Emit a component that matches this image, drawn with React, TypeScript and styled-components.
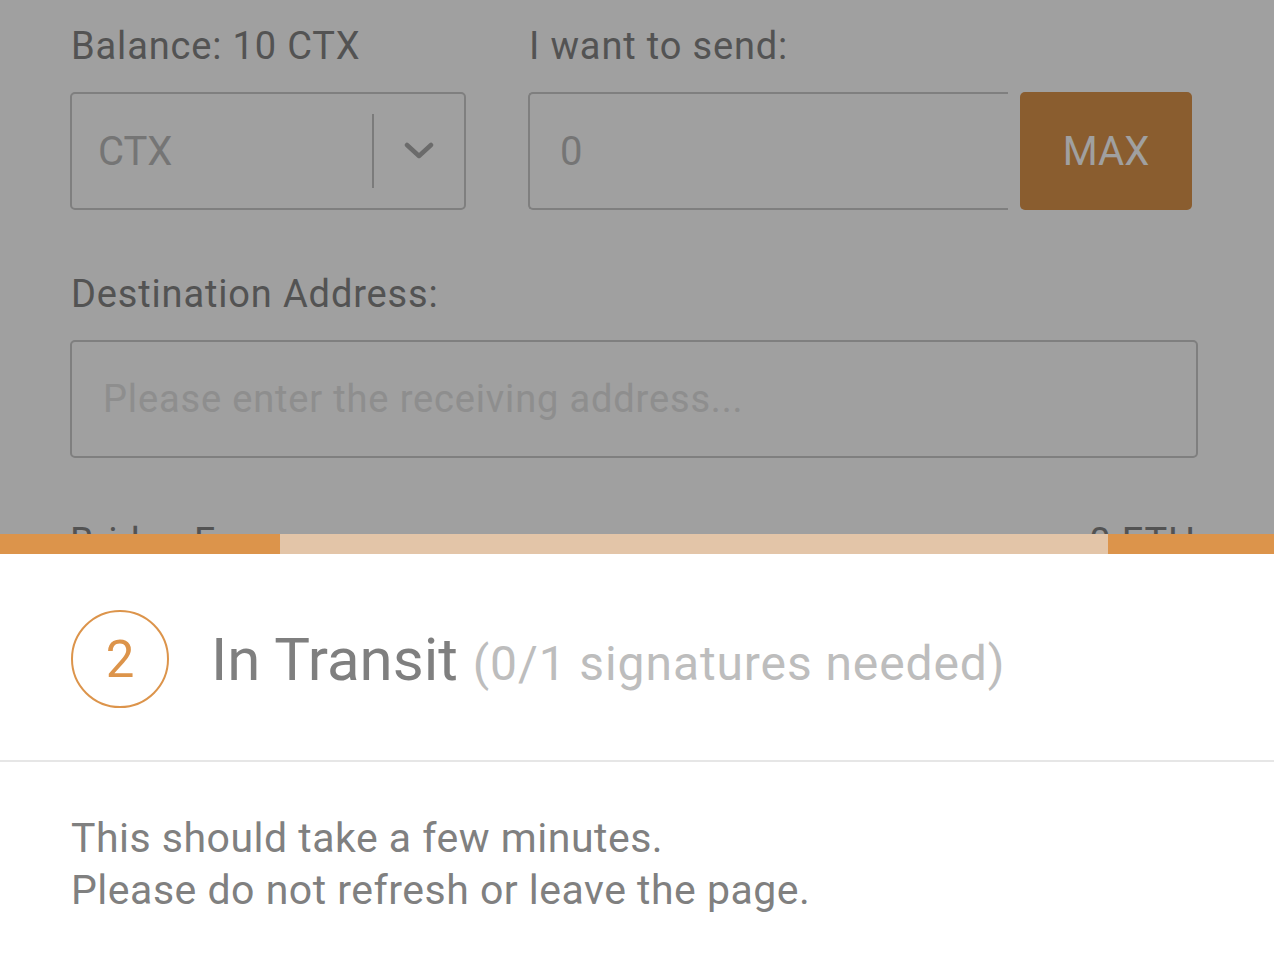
import React from "react";
import styled, { createGlobalStyle } from "styled-components";

const Global = createGlobalStyle`
  html, body { margin: 0; padding: 0; background: #ffffff; }
  body { font-family: Roboto, "Noto Sans", Arial, sans-serif; overflow: hidden; }
  * { box-sizing: border-box; }
`;

const Page = styled.div`
  width: 1274px;
  height: 968px;
  padding: 24px 76px 0 70px;
  background: #ffffff;
`;

const Row = styled.div`
  display: flex;
  gap: 62px;
  margin-bottom: 62px;
`;

const Field = styled.div<{ $w?: number }>`
  display: flex;
  flex-direction: column;
  gap: 24px;
  width: ${(p) => (p.$w ? `${p.$w}px` : "100%")};
`;

const Label = styled.div`
  font-size: 38px;
  line-height: 44px;
  letter-spacing: 0.85px;
  color: #858585;
  padding-left: 1px;
`;

const Box = styled.div`
  height: 118px;
  border: 2px solid #cacaca;
  border-radius: 5px;
  display: flex;
  align-items: center;
`;

const SelectBox = styled(Box)`
  padding-left: 26px;
`;

const BoxText = styled.div`
  flex: 1;
  font-size: 40px;
  color: #bbbbbb;
`;

const Divider = styled.div`
  width: 2px;
  height: 74px;
  background: #c5c5c5;
`;

const Chevron = styled.div`
  width: 90px;
  display: flex;
  justify-content: center;
  align-items: center;
  color: #ababab;
`;

const AmountGroup = styled.div`
  display: flex;
  gap: 12px;
`;

const AmountInput = styled(Box)`
  width: 480px;
  border-right: none;
  border-radius: 5px 0 0 5px;
  padding-left: 30px;
`;

const MaxButton = styled.div`
  width: 172px;
  height: 118px;
  border-radius: 5px;
  background: #dc944b;
  color: #ffffff;
  font-size: 40px;
  display: flex;
  align-items: center;
  justify-content: center;
`;

const AddressBox = styled(Box)`
  width: 1128px;
  padding-left: 31px;
`;

const Placeholder = styled.div`
  font-size: 38px;
  letter-spacing: 0.85px;
  color: #e2e2e2;
`;

const FeeRow = styled.div`
  display: flex;
  justify-content: space-between;
  width: 1126px;
  font-size: 38px;
  line-height: 44px;
  letter-spacing: 0.85px;
  color: #858585;
`;

const Backdrop = styled.div`
  position: fixed;
  inset: 0;
  background: rgba(0, 0, 0, 0.372);
`;

const Sheet = styled.div`
  position: fixed;
  left: 0;
  right: 0;
  bottom: 0;
  height: 434px;
  background: #ffffff;
  display: flex;
  flex-direction: column;
`;

const Progress = styled.div`
  height: 20px;
  display: flex;
  background: #e3c5a8;
`;

const Segment = styled.div<{ $w: number; $on: boolean }>`
  width: ${(p) => p.$w}px;
  flex: ${(p) => (p.$w === 0 ? 1 : "none")};
  background: ${(p) => (p.$on ? "#dc944b" : "transparent")};
`;

const Header = styled.div`
  display: flex;
  align-items: center;
  gap: 42px;
  padding: 56px 71px 52px;
  border-bottom: 2px solid #e6e6e6;
`;

const StepCircle = styled.div`
  width: 98px;
  height: 98px;
  border: 2px solid #dc944b;
  border-radius: 50%;
  color: #dc944b;
  font-size: 51px;
  display: flex;
  align-items: center;
  justify-content: center;
  flex-shrink: 0;
`;

const Title = styled.div`
  font-size: 60px;
  color: #7f7f7f;
  white-space: nowrap;
`;

const Sub = styled.span`
  font-size: 48px;
  letter-spacing: 0.9px;
  color: #bdbdbd;
`;

const Body = styled.div`
  padding: 50px 71px 0;
  font-size: 41px;
  line-height: 52px;
  color: #808080;
  letter-spacing: 0.5px;
`;

export default function App() {
  return (
    <>
      <Global />
      <Page>
        <Row>
          <Field $w={396}>
            <Label>Balance: 10 CTX</Label>
            <SelectBox>
              <BoxText>CTX</BoxText>
              <Divider />
              <Chevron>
                <svg width="30" height="18" viewBox="0 0 30 18">
                  <path d="M3 3 L15 14 L27 3" fill="none" stroke="currentColor" strokeWidth="4.5" strokeLinecap="round" strokeLinejoin="round" />
                </svg>
              </Chevron>
            </SelectBox>
          </Field>
          <Field $w={664}>
            <Label>I want to send:</Label>
            <AmountGroup>
              <AmountInput>
                <BoxText>0</BoxText>
              </AmountInput>
              <MaxButton>MAX</MaxButton>
            </AmountGroup>
          </Field>
        </Row>
        <Row>
          <Field>
            <Label>Destination Address:</Label>
            <AddressBox>
              <Placeholder>Please enter the receiving address...</Placeholder>
            </AddressBox>
          </Field>
        </Row>
        <FeeRow>
          <span>Bridge Fee</span>
          <span>0 ETH</span>
        </FeeRow>
      </Page>
      <Backdrop />
      <Sheet>
        <Progress>
          <Segment $w={280} $on />
          <Segment $w={828} $on={false} />
          <Segment $w={0} $on />
        </Progress>
        <Header>
          <StepCircle>2</StepCircle>
          <Title>
            In Transit <Sub>(0/1 signatures needed)</Sub>
          </Title>
        </Header>
        <Body>
          This should take a few minutes.
          <br />
          Please do not refresh or leave the page.
        </Body>
      </Sheet>
    </>
  );
}
